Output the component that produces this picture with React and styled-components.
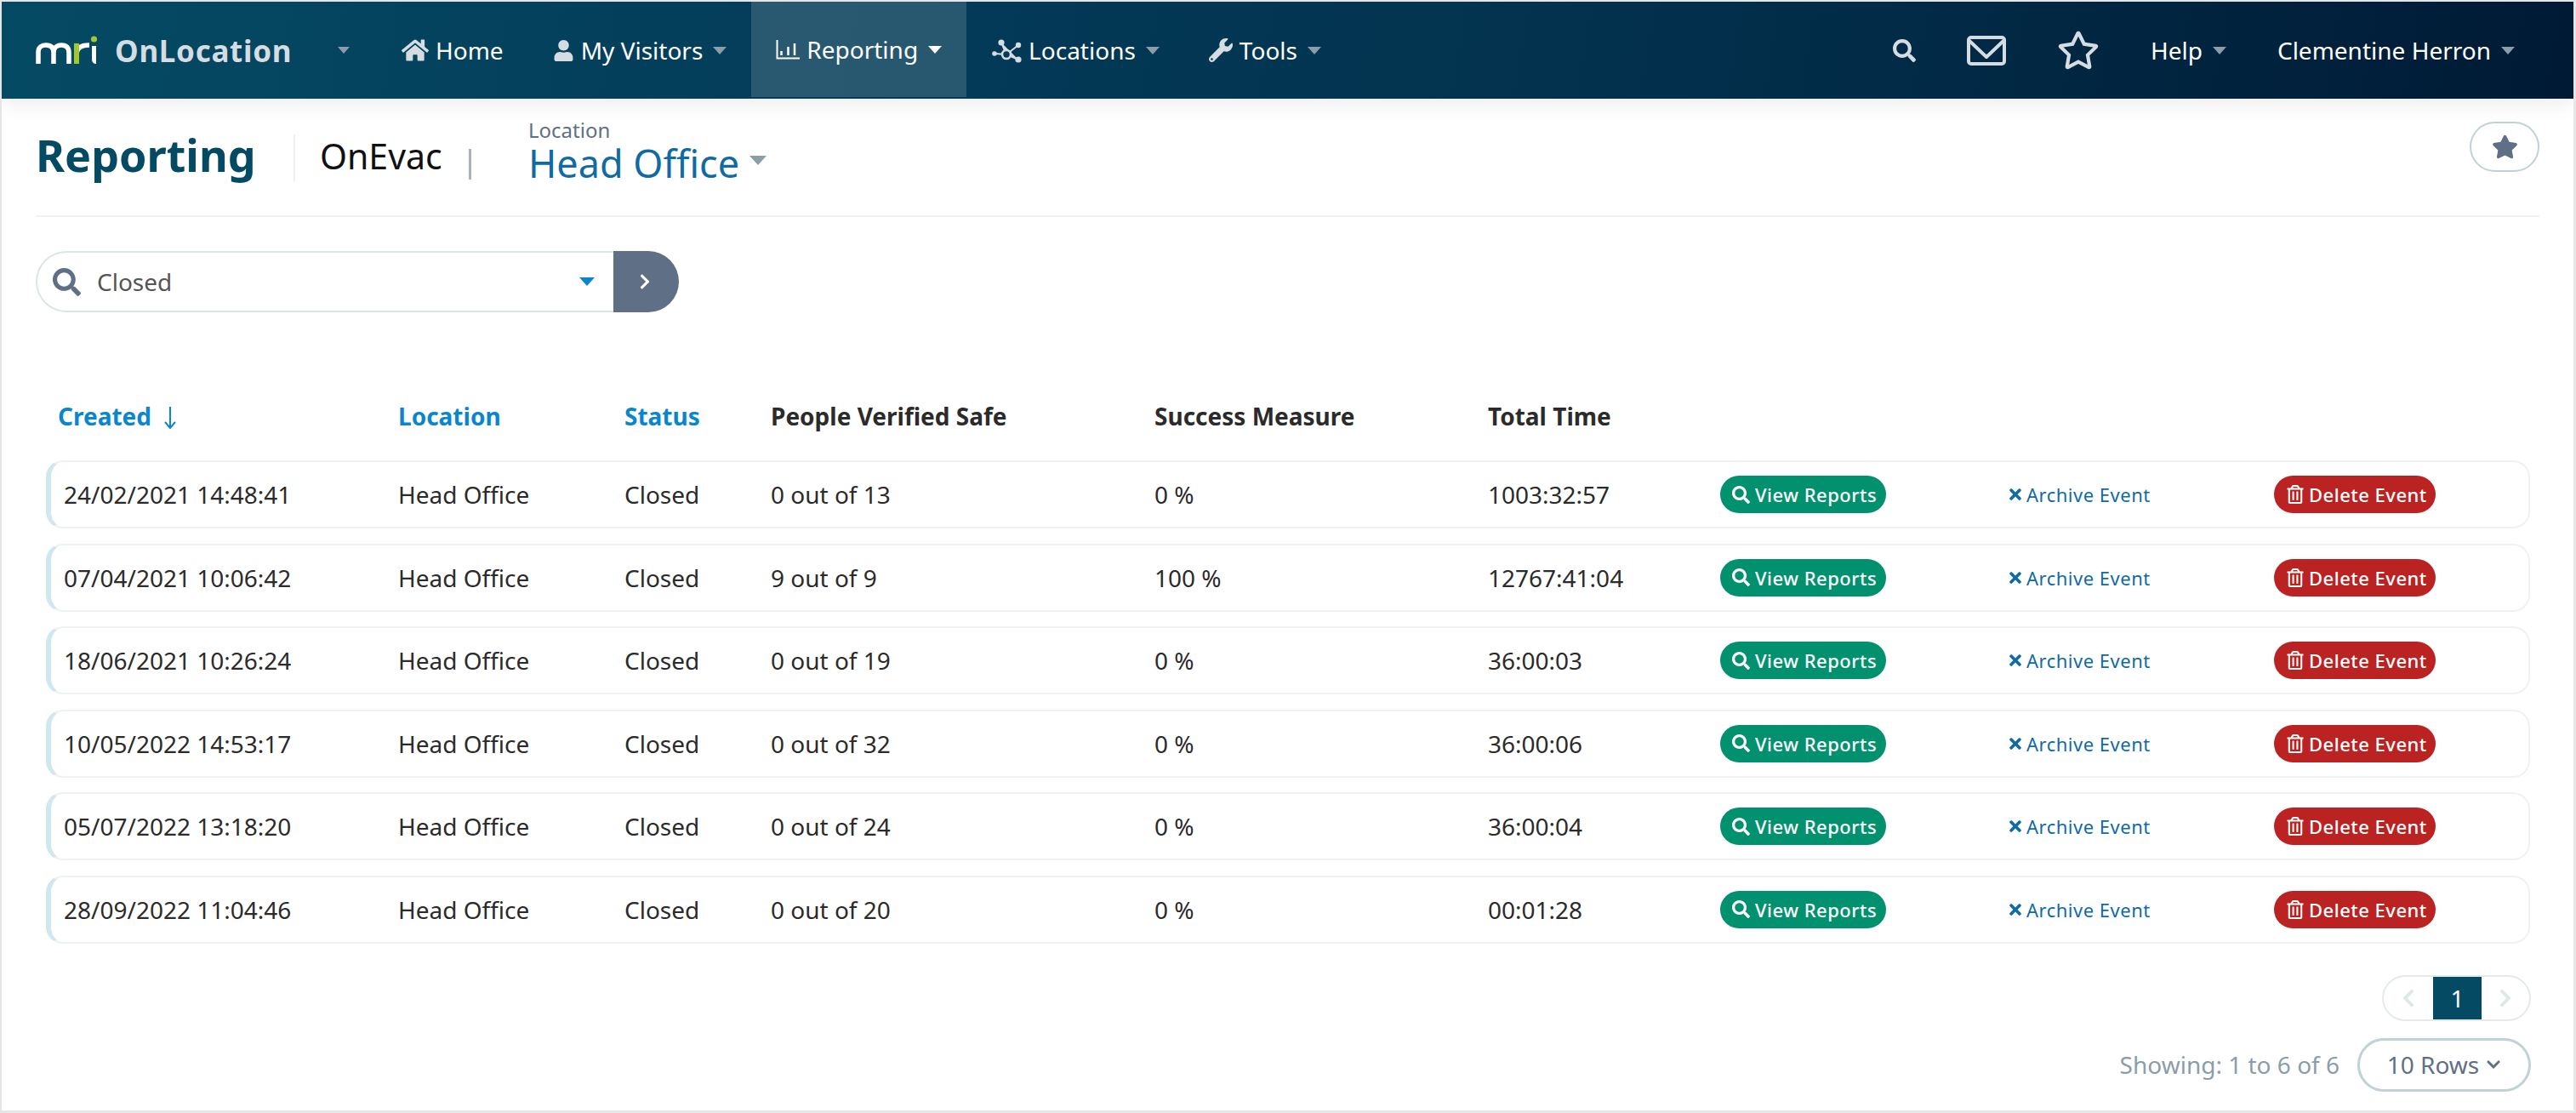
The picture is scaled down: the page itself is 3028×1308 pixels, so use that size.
import React from 'react'
import styled, { createGlobalStyle } from 'styled-components'
import {
    FaHome, FaUser, FaSearch, FaRegStar, FaStar, FaWrench, FaTimes,
    FaRegTrashAlt, FaChevronDown, FaChevronLeft, FaChevronRight,
} from 'react-icons/fa'

const colors = {
    navy: '#054a63',
    slate: '#5f6f85',
    blue: '#0a86cc',
    link: '#106ba3',
    pale: '#d5dde2',
    line: '#eef2f2',
    ink: '#2b2b2b',
}

const GlobalStyle = createGlobalStyle`
    html, body { margin: 0; padding: 0; background: #fff; }
    body { font-family: "Noto Sans", "Open Sans", sans-serif; font-size: 28px; color: ${colors.ink}; }
    * { box-sizing: border-box; }
`

const Page = styled.div`
    width: 3028px;
    height: 1308px;
    border-style: solid;
    border-color: #e6e6e6;
    border-width: 2px 3px 3px 2px;
    overflow: hidden;
`

// Top bar
const TopBar = styled.header`
    height: 114px;
    display: flex;
    align-items: stretch;
    background: linear-gradient(100deg, #054a63 0%, #033b58 35%, #02304c 65%, #001a35 100%);
    box-shadow: 0 6px 22px rgba(0, 0, 0, .08);
    position: relative;
`

const Brand = styled.div`
    display: flex;
    align-items: center;
    padding-left: 40px;
    width: 441px;
`

const BrandName = styled.span`
    font-size: 35px;
    font-weight: 700;
    color: ${colors.pale};
    margin-left: 21px;
    letter-spacing: .7px;
`

const Caret = styled.span`
    display: inline-block;
    width: 0;
    height: 0;
    border-left: ${p => p.$size || 8}px solid transparent;
    border-right: ${p => p.$size || 8}px solid transparent;
    border-top: ${p => (p.$size || 8) + 1}px solid ${p => p.$color || '#8c9daa'};
    margin-left: ${p => p.$gap === undefined ? 12 : p.$gap}px;
    margin-top: ${p => p.$top || 0}px;
`

const NavItem = styled.a`
    display: flex;
    align-items: center;
    gap: 8px;
    padding: 0 29px;
    margin-bottom: ${p => p.$active ? 2 : 0}px;
    color: #fff;
    font-size: 28px;
    background: ${p => p.$active ? 'rgba(255, 255, 255, .15)' : 'none'};
    cursor: pointer;
    svg { color: ${p => p.$active ? '#fff' : colors.pale}; flex: none; }
`

const RightNav = styled.div`
    margin-left: auto;
    padding-right: 69px;
    display: flex;
    align-items: center;
    gap: 60px;
    color: ${colors.pale};
`

const RightLink = styled.a`
    display: flex;
    align-items: center;
    color: #fff;
    font-size: 28px;
`

// Page heading
const Content = styled.main`
    padding: 0 40px;
`

const Heading = styled.div`
    height: 139px;
    border-bottom: 2px solid ${colors.line};
    display: flex;
    align-items: flex-start;
`

const PageTitle = styled.h1`
    margin: 42px 0 0;
    height: 55px;
    width: 305px;
    border-right: 2px solid #f0f0f0;
    font-size: 52px;
    line-height: 48px;
    font-weight: 700;
    color: ${colors.navy};
`

const ModuleName = styled.div`
    margin: 49px 0 0 29px;
    width: 175px;
    font-size: 41px;
    line-height: 36px;
    color: #111;
`

const ModulePipe = styled.span`
    width: 3px;
    height: 36px;
    margin-top: 59px;
    background: #a9b1bf;
`

const LocationPicker = styled.div`
    margin: 23px 0 0 67px;
`

const PickerLabel = styled.div`
    font-size: 24px;
    line-height: 28px;
    color: ${colors.slate};
`

const PickerValue = styled.div`
    display: flex;
    align-items: flex-start;
    font-size: 45px;
    line-height: 50px;
    color: ${colors.link};
`

const FavButton = styled.button`
    margin-left: auto;
    margin-top: 27px;
    width: 82px;
    height: 59px;
    border: 2px solid #c3d0d5;
    border-radius: 30px;
    background: #fff;
    color: ${colors.slate};
    display: flex;
    align-items: center;
    justify-content: center;
`

// Filter
const Filter = styled.div`
    display: flex;
    margin-top: 40px;
    width: 756px;
    height: 72px;
`

const FilterInput = styled.div`
    flex: 1;
    display: flex;
    align-items: center;
    padding: 0 22px 0 18px;
    border: 2px solid #dbe4e6;
    border-right: 0;
    border-radius: 36px 0 0 36px;
    color: #555;
    svg { color: ${colors.slate}; margin-right: 19px; }
`

const FilterGo = styled.button`
    width: 78px;
    padding: 0 3px 0 0;
    border: 0;
    border-radius: 0 36px 36px 0;
    background: ${colors.slate};
    color: #fff;
    display: flex;
    align-items: center;
    justify-content: center;
`

// Table
const Table = styled.section`
    margin: 94px 0 0 12px;
    width: 2920px;
`

const HeadRow = styled.div`
    display: grid;
    grid-template-columns: 400px 266px 172px 451px 392px 1fr;
    padding-left: 14px;
    height: 56px;
    align-items: center;
    margin-bottom: 24px;
`

const HeadCell = styled.div`
    display: flex;
    align-items: center;
    font-weight: 700;
    color: ${p => p.$sortable ? colors.blue : colors.ink};
`

const Rows = styled.div`
    display: flex;
    flex-direction: column;
    gap: 17.5px;
`

const Row = styled.div`
    height: 80px;
    display: grid;
    grid-template-columns: 393px 266px 172px 451px 392px 273px 339px 312px 1fr;
    align-items: center;
    padding-left: 15px;
    border: 2px solid ${colors.line};
    border-left: 6px solid #cfe7ef;
    border-radius: 20px;
`

const Pill = styled.button`
    justify-self: start;
    display: inline-flex;
    align-items: center;
    gap: ${p => p.$gap}px;
    height: 44px;
    width: ${p => p.$width}px;
    padding: 0 0 0 14px;
    border: 0;
    border-radius: 22px;
    background: ${p => p.$bg};
    color: #fff;
    font-family: inherit;
    font-size: 22px;
    font-weight: 500;
    letter-spacing: .5px;
    white-space: nowrap;
`

const ArchiveLink = styled.a`
    display: inline-flex;
    align-items: center;
    gap: 3px;
    margin-left: -2px;
    color: ${colors.link};
    font-size: 22px;
    letter-spacing: .5px;
    white-space: nowrap;
`

// Footer
const Footer = styled.div`
    width: 2921px;
    margin: 37px 0 0 12px;
    display: flex;
    flex-direction: column;
    align-items: flex-end;
    gap: 20px;
`

const Pager = styled.div`
    width: 175px;
    height: 54px;
    display: grid;
    grid-template-columns: 58px 57px 1fr;
    align-items: center;
    justify-items: center;
    border: 2px solid #e4eaea;
    border-radius: 27px;
    color: #dfe8e8;
`

const PageNumber = styled.span`
    width: 100%;
    height: 100%;
    display: flex;
    align-items: center;
    justify-content: center;
    background: ${colors.navy};
    color: #fff;
`

const RowsBar = styled.div`
    display: flex;
    align-items: center;
    gap: 21px;
`

const Showing = styled.span`
    color: #8a9dab;
`

const RowsSelect = styled.button`
    width: 204px;
    height: 63px;
    display: flex;
    align-items: center;
    justify-content: center;
    gap: 8px;
    border: 3px solid #c3d0d5;
    border-radius: 32px;
    background: #fff;
    color: ${colors.slate};
    font-family: inherit;
    font-size: 28px;
`

const MriLogo = () => (
    <svg width="72" height="34" viewBox="0 0 72 34" fill="none">
        <path
            d="M3 33V19C3 13 8 11 12 11C18 11 21 14 21 20V33M21 20C21 14 25 11 30 11C36 11 39 14 39 20V33"
            stroke="#fff" strokeWidth="5.5"
        />
        <path d="M48 22C48 14 54 11 63 11" stroke="#fff" strokeWidth="5.5" />
        <path d="M48 9V33" stroke="#a4c72a" strokeWidth="6" />
        <path d="M66 12H71V33C68 33 66 31 66 27Z" fill="#fff" />
        <circle cx="68.5" cy="4" r="3.6" fill="#a4c72a" />
    </svg>
)

const ChartIcon = () => (
    <svg width="28" height="24" viewBox="0 0 28 24" fill="none" stroke="currentColor">
        <path d="M1.5 1V22.5H28" strokeWidth="2" />
        <path d="M6.5 14V19M14.5 9V19M22 5V19" strokeWidth="2.5" />
    </svg>
)

const NetworkIcon = () => (
    <svg width="36" height="29" viewBox="6 8 36 29" fill="currentColor">
        <path d="M18 13L24 27L38 33M24 27L38 16M24 27L10 26" stroke="currentColor" strokeWidth="2" />
        <circle cx="24" cy="27" r="5" fill="#033b58" stroke="currentColor" strokeWidth="2.6" />
        <circle cx="18" cy="13" r="3.6" />
        <circle cx="38" cy="16" r="3.2" />
        <circle cx="10" cy="26" r="2.8" />
        <circle cx="38" cy="33" r="3.6" />
    </svg>
)

const MailIcon = () => (
    <svg width="46" height="35" viewBox="0 0 46 35" fill="none" stroke="currentColor" strokeWidth="4">
        <rect x="2" y="2" width="42" height="31" rx="3" />
        <path d="M3 6L23 25L43 6" strokeLinejoin="round" />
    </svg>
)

const columns = ['Created', 'Location', 'Status', 'People Verified Safe', 'Success Measure', 'Total Time']

const events = [
    ['24/02/2021 14:48:41', '0 out of 13', '0 %', '1003:32:57'],
    ['07/04/2021 10:06:42', '9 out of 9', '100 %', '12767:41:04'],
    ['18/06/2021 10:26:24', '0 out of 19', '0 %', '36:00:03'],
    ['10/05/2022 14:53:17', '0 out of 32', '0 %', '36:00:06'],
    ['05/07/2022 13:18:20', '0 out of 24', '0 %', '36:00:04'],
    ['28/09/2022 11:04:46', '0 out of 20', '0 %', '00:01:28'],
]

const App = () => (
    <Page>
        <GlobalStyle />
        <TopBar>
            <Brand>
                <MriLogo />
                <BrandName>OnLocation</BrandName>
                <Caret $size={7} $gap={54} />
            </Brand>
            <NavItem><FaHome size={32} />Home</NavItem>
            <NavItem><FaUser size={25} />My Visitors<Caret $gap={4} /></NavItem>
            <NavItem $active><ChartIcon />Reporting<Caret $color="#fff" $gap={4} /></NavItem>
            <NavItem><NetworkIcon />Locations<Caret $gap={4} /></NavItem>
            <NavItem><FaWrench size={28} />Tools<Caret $gap={4} /></NavItem>
            <RightNav>
                <FaSearch size={27} />
                <MailIcon />
                <FaRegStar size={50} />
                <RightLink>Help<Caret /></RightLink>
                <RightLink>Clementine Herron<Caret /></RightLink>
            </RightNav>
        </TopBar>

        <Content>
            <Heading>
                <PageTitle>Reporting</PageTitle>
                <ModuleName>OnEvac</ModuleName>
                <ModulePipe />
                <LocationPicker>
                    <PickerLabel>Location</PickerLabel>
                    <PickerValue>Head Office<Caret $size={10} $gap={12} $top={16} /></PickerValue>
                </LocationPicker>
                <FavButton><FaStar size={31} /></FavButton>
            </Heading>

            <Filter>
                <FilterInput>
                    <FaSearch size={33} />
                    Closed
                    <Caret $size={9} $color={colors.blue} $gap={479} />
                </FilterInput>
                <FilterGo><FaChevronRight size={20} /></FilterGo>
            </Filter>

            <Table>
                <HeadRow>
                    {columns.map((name, i) => (
                        <HeadCell key={name} $sortable={i < 3}>
                            {name}
                            {i === 0 && (
                                <svg width="14" height="26" viewBox="0 0 14 26" fill="none" stroke="currentColor" strokeWidth="2" style={{ marginLeft: 15, marginTop: 4 }}>
                                    <path d="M7 0V24M1 18L7 25L13 18" />
                                </svg>
                            )}
                        </HeadCell>
                    ))}
                </HeadRow>
                <Rows>
                    {events.map(([created, safe, measure, total]) => (
                        <Row key={created}>
                            <span>{created}</span>
                            <span>Head Office</span>
                            <span>Closed</span>
                            <span>{safe}</span>
                            <span>{measure}</span>
                            <span>{total}</span>
                            <Pill $bg="#02916e" $width={195} $gap={6}><FaSearch size={21} />View Reports</Pill>
                            <ArchiveLink><FaTimes size={20} />Archive Event</ArchiveLink>
                            <Pill $bg="#bb2222" $width={190} $gap={5}><FaRegTrashAlt size={22} />Delete Event</Pill>
                        </Row>
                    ))}
                </Rows>
            </Table>

            <Footer>
                <Pager>
                    <FaChevronLeft size={24} />
                    <PageNumber>1</PageNumber>
                    <FaChevronRight size={24} />
                </Pager>
                <RowsBar>
                    <Showing>Showing: 1 to 6 of 6</Showing>
                    <RowsSelect>10 Rows<FaChevronDown size={18} /></RowsSelect>
                </RowsBar>
            </Footer>
        </Content>
    </Page>
)

export default App
